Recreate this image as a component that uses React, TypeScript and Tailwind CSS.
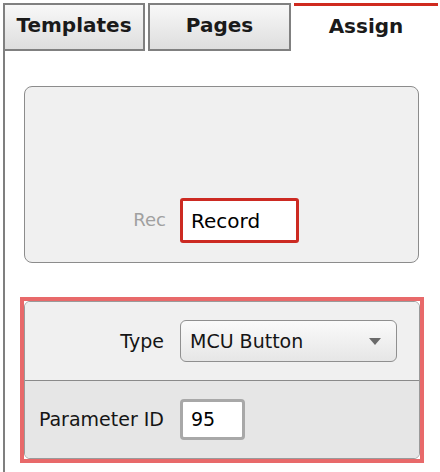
import React from "react";

const font = { fontFamily: '"DejaVu Sans", "Noto Sans", sans-serif' };

const Tab = ({ label, active, width }: { label: string; active?: boolean; width: string }) =>
  active ? (
    <div className={`${width} h-[48px] border-t-[3px] border-[#cf2a1f] bg-white flex items-center justify-center pb-[5px] text-[20px] font-bold text-[#1a1a1a]`}>
      {label}
    </div>
  ) : (
    <div className={`${width} h-[48px] border-2 border-[#808080] bg-gradient-to-b from-[#f8f8f8] to-[#dedede] flex items-center justify-center pb-[5px] text-[20px] font-bold text-[#1a1a1a]`}>
      {label}
    </div>
  );

export default function App() {
  return (
    <div className="w-[440px] h-[472px] bg-white overflow-hidden" style={font}>
      {/* tab strip */}
      <div className="flex gap-[3px] pt-[3px] pl-[3px]">
        <Tab label="Templates" width="w-[142px]" />
        <Tab label="Pages" width="w-[143px]" />
        <Tab label="Assign" width="w-[144px]" active />
      </div>

      {/* panel */}
      <div className="ml-[3px] h-[421px] border-l-2 border-[#7f7f7f] pt-[35px]">
        {/* record card */}
        <div className="ml-[19px] w-[395px] h-[177px] rounded-[8px] border-[1.5px] border-[#8c8c8c] bg-[#f0f0f0] flex items-end pb-[19px]">
          <div className="w-[141px] text-right text-[18px] text-[#a0a0a0] pb-[10px]">Rec</div>
          <div className="ml-[14px] w-[119px] h-[45px] rounded-[3px] border-[3px] border-[#cc2a22] bg-white flex items-center pl-[8px] text-[20px] text-black">
            Record
          </div>
        </div>

        {/* selected parameter card */}
        <div className="ml-[15px] mt-[34px] w-[404px] h-[166px] border-4 border-[#e8696a]">
          <div className="h-full rounded-[6px] border border-[#9a9a9a] overflow-hidden flex flex-col">
            <div className="h-[79px] bg-[#f0f0f0] flex items-center border-b-[1.5px] border-[#8a8a8a]">
              <div className="w-[139px] text-right text-[19px] text-[#151515]">Type</div>
              <div className="ml-[16px] w-[217px] h-[42px] rounded-[6px] border-[1.5px] border-[#8f8f8f] bg-gradient-to-b from-[#fafafa] to-[#e6e6e6] flex items-center justify-between pl-[9px] pr-[15px] text-[19px] text-[#151515]">
                <span>MCU Button</span>
                <svg width="12" height="7" viewBox="0 0 12 7">
                  <path d="M0 0 L12 0 L6 7 Z" fill="#6a6a6a" />
                </svg>
              </div>
            </div>
            <div className="flex-1 bg-[#e6e6e6] flex items-center">
              <div className="w-[139px] text-right text-[19px] text-[#151515]">Parameter ID</div>
              <div className="ml-[16px] w-[65px] h-[41px] rounded-[4px] border-[3px] border-[#a8a8a8] bg-white flex items-center pl-[8px] text-[19px] text-black">
                95
              </div>
            </div>
          </div>
        </div>
      </div>
    </div>
  );
}
